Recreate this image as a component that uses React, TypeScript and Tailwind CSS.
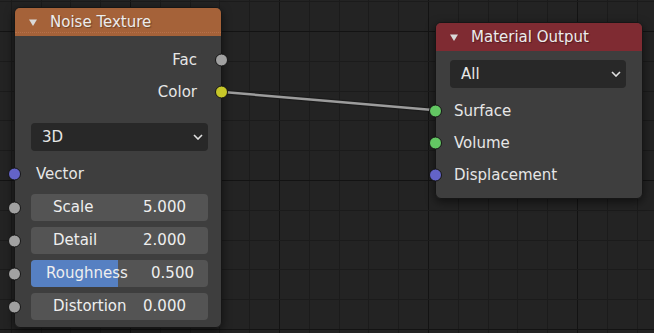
import React from 'react';

const WIDTH = 654;
const HEIGHT = 333;
const STEP = 29.8;

type Side = 'left' | 'right';

const SOCKET = {
  gray: 'bg-[#a1a1a1]',
  yellow: 'bg-[#c7c729]',
  blue: 'bg-[#6363c7]',
  green: 'bg-[#63c763]',
};

const buildGrid = () => {
  const lines: { x?: number; y?: number; major: boolean }[] = [];
  for (let k = -10; k <= 13; k++) {
    const x = Math.round(279 + STEP * k);
    if (x >= 0 && x <= WIDTH) lines.push({ x, major: k % 5 === 0 });
  }
  for (let k = -2; k <= 11; k++) {
    const y = Math.round(31 + STEP * k);
    if (y >= 0 && y <= HEIGHT) lines.push({ y, major: k % 5 === 0 });
  }
  return lines;
};

const Grid = () => (
  <svg className="absolute inset-0" width={WIDTH} height={HEIGHT} shapeRendering="crispEdges">
    <rect width={WIDTH} height={HEIGHT} fill="#232323" />
    {buildGrid().map((l, i) =>
      l.x !== undefined ? (
        <rect key={i} x={l.x} y={0} width={1} height={HEIGHT} fill={l.major ? '#131313' : '#1b1b1b'} />
      ) : (
        <rect key={i} x={0} y={l.y} width={WIDTH} height={1} fill={l.major ? '#131313' : '#1b1b1b'} />
      )
    )}
  </svg>
);

const Link = () => (
  <svg className="absolute inset-0" width={WIDTH} height={HEIGHT}>
    <path d="M223 92 C 260 95, 396 107, 433 110" fill="none" stroke="#1c1c1c" strokeWidth={5} />
    <path d="M223 92 C 260 95, 396 107, 433 110" fill="none" stroke="#9c9c9c" strokeWidth={2.5} />
  </svg>
);

function Socket({ color, side }: { color: string; side: Side }) {
  return (
    <span
      className={`absolute top-1/2 -translate-y-1/2 w-[13px] h-[13px] rounded-full border border-[#151515] ${
        side === 'left' ? 'left-[-7px]' : 'right-[-7px]'
      } ${color}`}
    />
  );
}

const Triangle = () => (
  <svg width="8" height="7" viewBox="0 0 8 7" className="shrink-0">
    <polygon points="0,0.5 8,0.5 4,7" fill="#d9d9d9" />
  </svg>
);

const Chevron = () => (
  <svg width="10" height="6" viewBox="0 0 10 6" className="shrink-0">
    <polyline points="1,1 5,5 9,1" fill="none" stroke="#e0e0e0" strokeWidth="1.6" />
  </svg>
);

function Header({ title, color, dotted }: { title: string; color: string; dotted?: boolean }) {
  return (
    <div className={`relative h-[28px] flex items-center gap-[13px] pl-[14px] rounded-t-[5px] ${color}`}>
      <Triangle />
      <span className="text-[#ececec] [text-shadow:1px_1px_1px_rgba(0,0,0,0.35)]">{title}</span>
      {dotted && (
        <div className="absolute left-0 right-0 bottom-[3px] border-b border-dotted border-[#b5704a]" />
      )}
    </div>
  );
}

function Dropdown({ value, className }: { value: string; className: string }) {
  return (
    <div className={`h-[28px] rounded-[4px] bg-[#282828] flex items-center justify-between pl-[11px] pr-[5px] ${className}`}>
      <span>{value}</span>
      <Chevron />
    </div>
  );
}

function OutputRow({ label, color }: { label: string; color: string }) {
  return (
    <div className="relative h-[32px] flex items-center justify-end pr-[24px]">
      <span>{label}</span>
      <Socket color={color} side="right" />
    </div>
  );
}

function InputRow({ label, color, pad, height }: { label: string; color: string; pad: string; height: string }) {
  return (
    <div className={`relative flex items-center ${pad} ${height}`}>
      <Socket color={color} side="left" />
      <span>{label}</span>
    </div>
  );
}

function Slider({ label, value, fill, pad }: { label: string; value: string; fill?: number; pad: string }) {
  return (
    <div className="relative h-[27px] mt-[6px] flex">
      <Socket color={SOCKET.gray} side="left" />
      <div className="relative ml-[16px] mr-[13px] flex-1 rounded-[4px] bg-[#545454] overflow-hidden">
        {fill !== undefined && (
          <div className="absolute inset-y-0 left-0 bg-[#5680c2]" style={{ width: `${fill * 100}%` }} />
        )}
        <div className={`relative h-full flex items-center justify-between text-[#eeeeee] ${pad}`}>
          <span>{label}</span>
          <span>{value}</span>
        </div>
      </div>
    </div>
  );
}

function NoiseTexture() {
  return (
    <div className="absolute left-[14px] top-[7px] w-[208px] rounded-[6px] border border-[#161616] bg-[#404040]/95 shadow-[0_3px_10px_rgba(0,0,0,0.55)]">
      <Header title="Noise Texture" color="bg-[#a56239]" dotted />
      <div className="pt-[8px] pb-[7px]">
        <OutputRow label="Fac" color={SOCKET.gray} />
        <OutputRow label="Color" color={SOCKET.yellow} />
        <Dropdown value="3D" className="mt-[15px] ml-[16px] mr-[13px]" />
        <InputRow label="Vector" color={SOCKET.blue} pad="pl-[21px] mt-[9px]" height="h-[28px]" />
        <Slider label="Scale" value="5.000" pad="px-[22px]" />
        <Slider label="Detail" value="2.000" pad="px-[22px]" />
        <Slider label="Roughness" value="0.500" fill={0.49} pad="pl-[15px] pr-[14px]" />
        <Slider label="Distortion" value="0.000" pad="px-[22px]" />
      </div>
    </div>
  );
}

function MaterialOutput() {
  return (
    <div className="absolute left-[435px] top-[22px] w-[208px] rounded-[6px] border border-[#161616] bg-[#404040]/95 shadow-[0_3px_10px_rgba(0,0,0,0.55)]">
      <Header title="Material Output" color="bg-[#7f2b32]" />
      <div className="pt-[9px] pb-[7px]">
        <Dropdown value="All" className="ml-[14px] mr-[16px]" />
        <div className="mt-[7px]">
          <InputRow label="Surface" color={SOCKET.green} pad="pl-[18px]" height="h-[32px]" />
          <InputRow label="Volume" color={SOCKET.green} pad="pl-[18px]" height="h-[32px]" />
          <InputRow label="Displacement" color={SOCKET.blue} pad="pl-[18px]" height="h-[32px]" />
        </div>
      </div>
    </div>
  );
}

export default function App() {
  return (
    <div className="relative w-[654px] h-[333px] overflow-hidden text-[15px] leading-none text-[#e6e6e6] font-['DejaVu_Sans',sans-serif]">
      <Grid />
      <Link />
      <NoiseTexture />
      <MaterialOutput />
    </div>
  );
}
